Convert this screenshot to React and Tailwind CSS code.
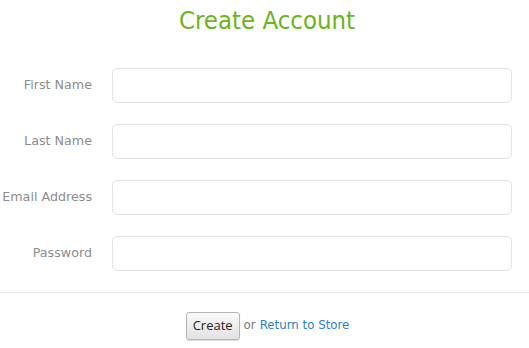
export default function App() {
  const fields = ['First Name', 'Last Name', 'Email Address', 'Password']

  return (
    <div className="w-[529px] h-[348px] bg-white overflow-hidden" style={{ fontFamily: '"DejaVu Sans", sans-serif' }}>
      <h1 className="pl-[5px] text-center text-[25.5px] leading-[40px] text-[#6cb31c]" style={{ fontFamily: '"DejaVu Sans Condensed", "DejaVu Sans", sans-serif' }}>
        Create Account
      </h1>

      <div className="mt-[28px] flex flex-col gap-[21px] pr-[17px]">
        {fields.map(f => (
          <div key={f} className="flex items-center">
            <label className="w-[92px] -mt-[2px] text-right text-[12.7px] text-[#8c8c8c]">{f}</label>
            <input
              type={f === 'Password' ? 'password' : 'text'}
              className="ml-[20px] flex-1 h-[35px] rounded-[5px] border border-[#e3e3e3] bg-white outline-none"
            />
          </div>
        ))}
      </div>

      <div className="mt-[21px] border-t border-[#e6e6e6]" />

      <div className="mt-[19px] pl-[6px] flex items-center justify-center gap-[4px] text-[11.8px]">
        <button className="h-[28px] px-[6px] rounded-[3px] border border-[#b5b5b5] bg-gradient-to-b from-[#fafafa] to-[#e2e2e2] text-[13px] text-[#222] shadow-[0_1px_1px_rgba(0,0,0,0.15)]" style={{ fontFamily: '"Open Sans", sans-serif' }}>
          Create
        </button>
        <span className="text-[#777]">or</span>
        <a href="#" className="text-[#2a7ec9]">Return to Store</a>
      </div>
    </div>
  )
}
